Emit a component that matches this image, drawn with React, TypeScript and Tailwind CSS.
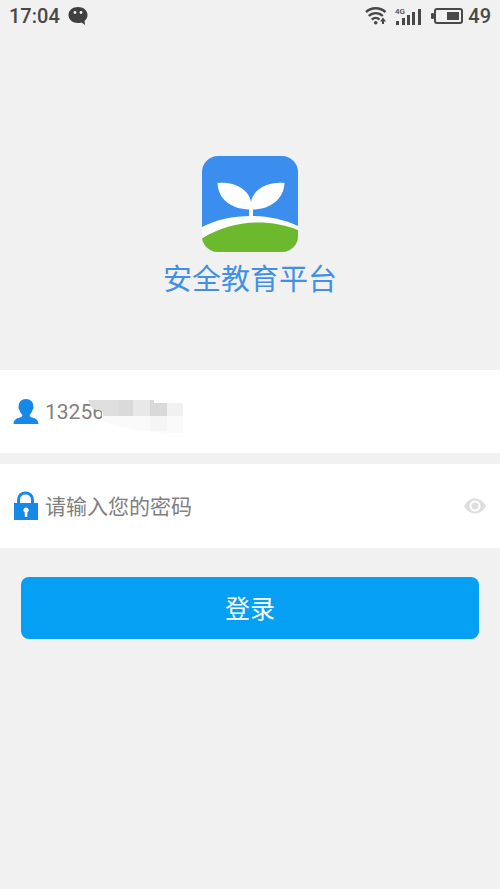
import React, { useState } from 'react';

const StatusBar: React.FC = () => (
    <header className="h-8 pl-[9px] pr-[9px] flex items-center justify-between text-[#484848] text-[20px] leading-8 font-medium">
        <div className="flex items-center gap-2">
            <span>17:04</span>
            <svg width="20" height="18" viewBox="0 0 20 18" aria-label="Message">
                <path d="M10 0C4.500 0 .5 3.400.5 8S4.500 16 10 16c1.300 0 2.500-.2 3.600-.6L17 18l-.5-4C18.400 12.500 19.500 10.500 19.500 8 19.500 3.400 15.500 0 10 0Z" fill="#404040" />
                <circle cx="7" cy="5.500" r="1.400" fill="#f1f1f1" />
                <circle cx="13" cy="5.500" r="1.400" fill="#f1f1f1" />
            </svg>
        </div>
        <div className="flex items-center">
            <svg width="22" height="20" viewBox="0 0 22 20" fill="none" stroke="#484848" strokeWidth="2.400" aria-label="Wi-Fi">
                <path d="M1 6C6.500.9 15 .9 20.500 6" />
                <path d="M3.800 10c4-3.900 10-3.900 14 0" />
                <path d="M6.800 13.700c2.300-2.200 5.500-2.200 7.700 0" />
                <circle cx="10.700" cy="16.800" r="1.800" fill="#484848" stroke="none" />
                <path d="M18 18v-4" strokeWidth="2" />
                <path d="m15 15.500 3-4 3 4Z" fill="#484848" stroke="none" />
            </svg>
            <svg className="ml-2" width="28" height="20" viewBox="0 0 28 20" fill="#484848" aria-label="Signal">
                <text x="0" y="8" fontSize="8">4G</text>
                <rect x="1" y="15" width="3" height="4" />
                <rect x="7" y="12" width="3" height="7" />
                <rect x="12" y="9" width="3" height="10" />
                <rect x="17" y="6" width="3" height="13" />
                <rect x="23" y="3" width="3" height="16" />
            </svg>
            <svg className="ml-2" width="32" height="18" viewBox="0 0 32 18" aria-label="Battery">
                <rect x="4" y="2" width="27" height="14" rx="2" fill="none" stroke="#484848" strokeWidth="2" />
                <rect x="0" y="6" width="3" height="6" rx="1" fill="#484848" />
                <rect x="16" y="5" width="12" height="8" fill="#484848" />
            </svg>
            <span className="ml-[5px]">49</span>
        </div>
    </header>
);

const Logo: React.FC = () => (
    <svg width="96" height="96" viewBox="0 0 96 96" aria-hidden="true">
        <defs>
            <clipPath id="tile">
                <rect width="96" height="96" rx="16" />
            </clipPath>
        </defs>
        <g clipPath="url(#tile)">
            <rect width="96" height="96" fill="#3b8eee" />
            <path d="M0 71C27 57 66 56 96 70v27H0Z" fill="#fff" />
            <path d="M0 82.500C29 64 66 62 96 74v23H0Z" fill="#6cb92d" />
            <path d="M47 62V53.500C29 53 16 43 15.500 27 32 25.500 47 33 49 46 51 33 66 25.500 82.500 27 82 43 68 53.500 51 53.500V62Z" fill="#fff" />
        </g>
    </svg>
);

const UserIcon: React.FC = () => (
    <svg className="shrink-0" width="26" height="26" viewBox="0 0 26 26" fill="#1688e6" aria-hidden="true">
        <path d="M13 0C8.500 0 5.700 3 5.700 7c0 1-.4 1.500-.1 2.600.2.900.8 1.300 1.100 2 .6 1.900 1.400 3.200 2.700 4.200.1 1.600-.7 2.300-2.500 2.800C3.500 19.600.8 20.500.5 25h25c-.3-4.500-3-5.400-6.400-6.400-1.800-.5-2.600-1.200-2.500-2.800 1.300-1 2.100-2.300 2.700-4.200.3-.7.900-1.100 1.100-2 .3-1.100-.1-1.600-.1-2.600C20.300 3 17.500 0 13 0Z" />
    </svg>
);

const LockIcon: React.FC = () => (
    <svg className="shrink-0" width="26" height="30" viewBox="0 0 26 30" aria-hidden="true">
        <path d="M5.500 14V9c0-9.500 14-9.500 14 0V14" fill="none" stroke="#1688e6" strokeWidth="3" />
        <rect x="1" y="12" width="24" height="17" fill="#1688e6" />
        <path d="M13 16.500a2.600 2.600 0 0 0-1.200 4.900V26h2.500v-4.600A2.600 2.600 0 0 0 13 16.500Z" fill="#fff" />
    </svg>
);

// Covers the digits of the account after the first few
const NumberMask: React.FC = () => (
    <svg className="absolute left-[88px] top-[29px] pointer-events-none" width="96" height="36" viewBox="0 0 96 36" aria-hidden="true">
        <path d="M14 10h10v14H14Z" fill="#fff" />
        <path d="M14 17h81v17C62 34 28 29 14 22Z" fill="#fafafa" />
        <path d="M0 1h45v16H15V13L11 11 5 10C3 8 1 5 0 1Z" fill="#dedede" />
        <rect x="31" y="1" width="14" height="16" fill="#dadada" />
        <rect x="45" y="1" width="17" height="16" fill="#e8e8e8" />
        <path d="M62 1h4v3h13v13H62Z" fill="#d9d9d9" />
        <rect x="79" y="4" width="16" height="13" fill="#f1f1f1" />
        <rect x="62" y="17" width="17" height="15" fill="#f5f5f5" />
    </svg>
);

export default function App() {
    const [account, setAccount] = useState('13256');
    const [password, setPassword] = useState('');
    const [showPassword, setShowPassword] = useState(false);

    return (
        <div className="min-h-screen bg-[#f1f1f1] font-['Roboto','Noto_Sans_CJK_SC',sans-serif]">
            <StatusBar />
            <main>
                <div className="pt-[124px] pb-[70px] flex flex-col items-center">
                    <Logo />
                    <h1 className="mt-2 text-[29px] leading-10 text-[#4190e6]">安全教育平台</h1>
                </div>
                <form onSubmit={(e) => e.preventDefault()}>
                    <div className="relative h-[83px] px-[13px] bg-white flex items-center">
                        <UserIcon />
                        <input
                            type="text"
                            aria-label="账号"
                            value={account}
                            onChange={(e) => setAccount(e.target.value)}
                            className="ml-[6px] min-w-0 flex-1 bg-transparent pt-px text-[21px] leading-8 text-[#808080] outline-none"
                        />
                        <NumberMask />
                    </div>
                    <div className="mt-[11px] h-[84px] px-[13px] bg-white flex items-center">
                        <LockIcon />
                        <input
                            type={showPassword ? 'text' : 'password'}
                            aria-label="密码"
                            placeholder="请输入您的密码"
                            value={password}
                            onChange={(e) => setPassword(e.target.value)}
                            className="ml-[6px] min-w-0 flex-1 bg-transparent pt-px text-[21px] leading-8 text-[#808080] placeholder:text-[#808080] outline-none"
                        />
                        <button type="button" aria-label="显示密码" onClick={() => setShowPassword(!showPassword)}>
                            <svg width="24" height="18" viewBox="0 0 24 18" aria-hidden="true">
                                <path d="M1 9C6-1 18-1 23 9 18 19 6 19 1 9Z" fill="#dedede" />
                                <circle cx="12" cy="9" r="4.500" fill="none" stroke="#fff" strokeWidth="2" />
                            </svg>
                        </button>
                    </div>
                    <div className="px-[21px] pt-[29px]">
                        <button type="submit" className="w-full h-[62px] pt-1 rounded-lg bg-[#059ff3] text-white text-[25px] leading-9">
                            登录
                        </button>
                    </div>
                </form>
            </main>
        </div>
    );
}
